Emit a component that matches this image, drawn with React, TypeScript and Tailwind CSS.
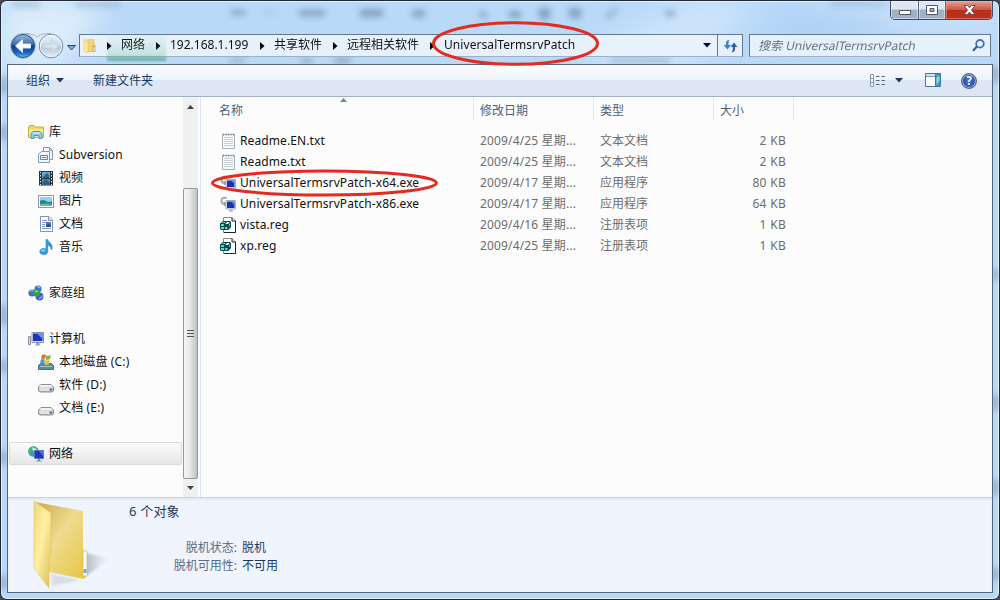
import type { ReactNode } from 'react';

const Arrow = () => (
    <span className="flex h-full w-[25px] shrink-0 items-center pl-[11px] pt-[1px]">
        <svg width="5" height="8" viewBox="0 0 5 8">
            <path d="M0 0L4.5 4L0 8Z" fill="#000" />
        </svg>
    </span>
);

const Down = ({ color = '#1e395b' }: { color?: string }) => (
    <svg width="8" height="5" viewBox="0 0 8 5" className="shrink-0">
        <path d="M0 0H8L4 4.6Z" fill={color} />
    </svg>
);

const LibraryIcon = () => (
    <svg width="16" height="16" viewBox="0 0 16 16">
        <path d="M.5 2.5L1.5 1.5H6L7 3H15.5V13.5H.5Z" fill="#ead66c" stroke="#c9ad3a" />
        <path d="M1 5H15V13H1Z" fill="#f6e68b" />
        <path d="M3 14.5V10L5 7.500H12L14 10V14.5H11V11.500H6V14.5Z" fill="#8fd0f0" stroke="#3f97cc" />
        <path d="M5.5 8H11.5L12.5 9.5H4.5Z" fill="#c4ecfb" />
    </svg>
);

const SubversionIcon = () => (
    <svg width="16" height="16" viewBox="0 0 16 16" fill="#f4f8fc" stroke="#7f9bb8">
        <path d="M5.5.5H11.5L14.5 3.5V12.5H5.5Z" />
        <path d="M11.5.5V3.5H14.5" fill="none" />
        <path d="M.5 7.5L3.5 4.5H11.5V15.5H.5Z" />
        <path d="M2.5 8.5H9.5V12.5H2.5ZM4 10.5H8.5" stroke="#6685aa" />
    </svg>
);

const VideoIcon = () => (
    <svg width="16" height="16" viewBox="0 0 16 16">
        <path d="M1 1H15V15.5H1Z" fill="#2b3139" />
        <path d="M4 2H12V8H4Z" fill="#57aee0" />
        <path d="M4 9H12V14.5H4Z" fill="#4191cc" />
        <path d="M5 7L9 3L11 5V8H5ZM5 12L8 9L12 13V14.5H4Z" fill="#315d7d" />
        <path d="M2.5 2V15M13.5 2V15" stroke="#e2e6e8" strokeDasharray="1.5 1.5" />
    </svg>
);

const PictureIcon = () => (
    <svg width="16" height="16" viewBox="0 0 16 16">
        <path d="M.5 2.5H15.5V14.5H.5Z" fill="#fff" stroke="#8897a5" />
        <path d="M2 4H14V13H2Z" fill="#8dd5f5" />
        <path d="M2 8Q5 6 8 8T14 8V10H2Z" fill="#317f86" />
        <path d="M2 10H14V13H2Z" fill="#2995a4" />
        <path d="M2 11.5L8 10.5L14 12V13H2Z" fill="#5cbf9d" />
    </svg>
);

const DocumentIcon = () => (
    <svg width="16" height="16" viewBox="0 0 16 16">
        <path d="M2.5.5H11L14.5 4V15.5H2.5Z" fill="#fcfdff" stroke="#8495a8" />
        <path d="M10.5.5V4.5H14.5" fill="#dce6f0" stroke="#8495a8" />
        <path d="M4 4.5H9M4 6.5H8M4 8.5H7M4 10.5H7M4 12.5H13" stroke="#8ca3bf" />
        <path d="M8 6H13V11H8Z" fill="#4b7eb2" />
        <path d="M8 9.5L11 8L13 10V11H8Z" fill="#234d71" />
    </svg>
);

const MusicIcon = () => (
    <svg width="16" height="16" viewBox="0 0 16 16">
        <path d="M8 .5H9.5C10 3 15 4 14 9.5L13 11C13.5 7.5 11 6.5 9.8 6V12.5C9.5 15.5 6.5 16 4 15.3C.5 14 1.5 9.8 5 9.5C6.5 9.3 7.5 9.8 8 10Z" fill="#299be0" stroke="#1778bd" strokeWidth=".5" />
        <ellipse cx="5" cy="11.5" rx="2.3" ry="1.3" fill="#7bcef4" />
    </svg>
);

const HomegroupIcon = () => (
    <svg width="16" height="16" viewBox="0 0 16 16">
        <circle cx="10" cy="4" r="3.6" fill="#4775c7" />
        <circle cx="4" cy="8" r="3.6" fill="#3c6fbd" />
        <circle cx="11.5" cy="11.5" r="4" fill="#4262bd" />
        <circle cx="8.5" cy="8" r="3.4" fill="#30a248" />
        <path d="M6.5 7Q8 4.5 10.5 6Q9 8 6.5 7Z" fill="#9ce39a" />
        <path d="M9 2Q11 1 12 3M2 6.5Q3.5 5 5 6M11 13.5Q14 13 14.5 10.5" stroke="#bcd5f5" fill="none" />
    </svg>
);

const ComputerIcon = () => (
    <svg width="16" height="16" viewBox="0 0 16 16">
        <path d="M.5 5.5H2.5V13.5H.5Z" fill="#dce0e4" stroke="#888f99" />
        <path d="M4 1.5H15.5V11.5H4Z" fill="#d9dfe8" stroke="#8a93a3" />
        <path d="M5 2.5H14.5V10H5Z" fill="#1a32c8" />
        <path d="M9 2.5H14.5V8Z" fill="#6f94f1" />
        <path d="M8 12H11.5V13.5L13 14.5H6.5L8 13.5Z" fill="#9ba2ac" />
    </svg>
);

const SystemDriveIcon = () => (
    <svg width="16" height="16" viewBox="0 0 16 16">
        <path d="M2.5 9.5H13.5L15.5 11.5V15.5H.5V11.5Z" fill="#5b8c9d" stroke="#4c6d79" />
        <path d="M2 12H14.5V12.8H2Z" fill="#a7d2d8" />
        <path d="M4 1Q6-.2 8 1L7 5Q5 4 3 5Z" fill="#ec6529" />
        <path d="M8.5 1.2Q11 2.5 13 1L12 5Q10 6.5 7.7 5.2Z" fill="#7ab843" />
        <path d="M2.8 5.6Q5 4.5 6.9 5.7L6 10Q4 9 2 10Z" fill="#41a0dc" />
        <path d="M7.5 6Q10 7 12 5.8L11 10Q8.5 11.5 6.5 10.3Z" fill="#f6bf25" />
    </svg>
);

const DriveIcon = () => (
    <svg width="16" height="16" viewBox="0 0 16 16">
        <path d="M3 7.5H13L15.5 10V14L14 15H2L.5 14V10Z" fill="#b9bdc2" stroke="#777c82" strokeWidth=".8" />
        <path d="M3 8H13L15 10.400H1Z" fill="#f1f2f4" />
        <path d="M1.5 11H11V14H1.5Z" fill="#e0e2e5" />
        <path d="M12 12H14V13.2H12Z" fill="#4a5560" />
    </svg>
);

const NetworkIcon = () => (
    <svg width="16" height="16" viewBox="0 0 16 16">
        <circle cx="5.5" cy="5.5" r="5.3" fill="#2e9bd2" />
        <path d="M2 2Q5-1 7 1Q7 4 4 5Q3 8 1 7Q-.5 4 2 2Z" fill="#43b55b" />
        <path d="M4 1.5Q7 1 9 4L5 5Z" fill="#c9f0e1" />
        <path d="M6.5 4.5H15.5V12.5H6.5Z" fill="#1b34c9" stroke="#6179a7" />
        <path d="M11 5H15V10Z" fill="#5273e3" />
        <path d="M10 13H12V14.5H13.5V15.5H8.5V14.5H10Z" fill="#7d8997" />
    </svg>
);

const TextFileIcon = () => (
    <svg width="16" height="16" viewBox="0 0 16 16">
        <path d="M2.5 1.5H14.5V15.5H2.5Z" fill="#f7f9fa" stroke="#a7aeb3" />
        <path d="M4 4.5H13M4 6.5H13M4 8.5H13M4 10.5H13M4 12.5H13" stroke="#c8d0d5" />
        <path d="M3 1.5H14" stroke="#858d92" strokeWidth="2" strokeDasharray="1 1.5" />
    </svg>
);

const ExeIcon = () => (
    <svg width="16" height="16" viewBox="0 0 16 16">
        <path d="M6.5 2Q1 1 1.5 5.5Q2 8.5 6 8" fill="none" stroke="#a3abb5" strokeWidth="2" />
        <path d="M4 5.5L7 8L4 10.5Z" fill="#8c97a5" />
        <path d="M6 4.5H15.5V13H6Z" fill="#e7ebef" stroke="#a4adba" />
        <path d="M7 5.5H14.5V12H7Z" fill="#1733b4" />
        <path d="M11 5.5H14.5V9Z" fill="#6a8cf2" />
        <path d="M9.5 13.5H12.5V14.5L13.5 15.5H8.5L9.5 14.5Z" fill="#a5acb5" />
    </svg>
);

const RegIcon = () => (
    <svg width="16" height="16" viewBox="0 0 16 16">
        <path d="M3.5.5H12L15.5 4V15.5H3.5Z" fill="#fff" stroke="#8a8a8a" />
        <path d="M12 .5V4H15.5V15.5H4" fill="none" stroke="#222" />
        <path d="M0 6.5L3 4H10L11 5V10L8.5 13H1L0 12Z" fill="#064d4d" />
        <path d="M1 7H4V9H1ZM1 10H4V12H1ZM5 10H7.5V12H5ZM3 5H6L5 6H2ZM9 7L10 6V8.5L9 9.5Z" fill="#65d2c7" />
        <path d="M7 5H9.5L8 7H5.500Z" fill="#e9fffc" />
    </svg>
);

interface NavItem {
    label: string;
    icon: () => ReactNode;
    child?: boolean;
    gap?: boolean;
    cls?: string;
}

const navItems: NavItem[] = [
    { label: '库', icon: LibraryIcon },
    { label: 'Subversion', icon: SubversionIcon, child: true, cls: 'tracking-[0.12px]' },
    { label: '视频', icon: VideoIcon, child: true },
    { label: '图片', icon: PictureIcon, child: true },
    { label: '文档', icon: DocumentIcon, child: true },
    { label: '音乐', icon: MusicIcon, child: true },
    { label: '家庭组', icon: HomegroupIcon, gap: true },
    { label: '计算机', icon: ComputerIcon, gap: true },
    { label: '本地磁盘 (C:)', icon: SystemDriveIcon, child: true, cls: 'tracking-[0.15px]' },
    { label: '软件 (D:)', icon: DriveIcon, child: true, cls: 'tracking-[0.15px]' },
    { label: '文档 (E:)', icon: DriveIcon, child: true, cls: 'tracking-[0.15px]' },
];

const files = [
    { name: 'Readme.EN.txt', icon: TextFileIcon, date: '2009/4/25', type: '文本文档', size: '2 KB' },
    { name: 'Readme.txt', icon: TextFileIcon, date: '2009/4/25', type: '文本文档', size: '2 KB' },
    { name: 'UniversalTermsrvPatch-x64.exe', icon: ExeIcon, date: '2009/4/17', type: '应用程序', size: '80 KB' },
    { name: 'UniversalTermsrvPatch-x86.exe', icon: ExeIcon, date: '2009/4/17', type: '应用程序', size: '64 KB' },
    { name: 'vista.reg', icon: RegIcon, date: '2009/4/16', type: '注册表项', size: '1 KB' },
    { name: 'xp.reg', icon: RegIcon, date: '2009/4/25', type: '注册表项', size: '1 KB' },
];

// soft shapes of the window behind the glass
const Glass = () => (
    <svg className="absolute inset-0" width="1000" height="600" viewBox="0 0 1000 600">
        <defs>
            <filter id="soft" x="-50%" y="-100%" width="200%" height="300%">
                <feGaussianBlur stdDeviation="3" />
            </filter>
            <filter id="haze" x="-50%" y="-50%" width="200%" height="200%">
                <feGaussianBlur stdDeviation="14" />
            </filter>
        </defs>
        <g filter="url(#haze)">
            <path d="M0 0H110L60 70H0Z" fill="#e6f2fd" opacity=".8" />
            <path d="M590 50L690 0H760L690 70H590Z" fill="#d9ecfd" opacity=".6" />
            <path d="M800 0H1000V30L900 25Z" fill="#dcecfb" opacity=".5" />
            <path d="M780 20H890V34H770Z" fill="#84b9ee" opacity=".45" />
        </g>
        <g filter="url(#soft)" fill="#58728f" opacity=".55">
            <path d="M12 2H40V7H12ZM75 2H120V7H75Z" opacity=".55" />
            <path d="M231 10H245V15H231Z" />
            <path d="M263 11H275V14H263Z" opacity=".4" />
            <path d="M299 10H325V16H299ZM360 9H383V17H360ZM412 10H425V17H412ZM481 9L489 18H480Z" />
            <path d="M509 11H521V18H509ZM539 8H550V19H539ZM569 8H581V18H569ZM605 17L616 8L618 10L608 19ZM663 11H677L670 18Z" />
            <path d="M830 1H885V6H830Z" opacity=".4" />
            <path d="M301 59H312V63H301ZM335 58H350V63H335ZM610 59H670V62H610ZM230 59H245V62H230Z" />
            <path d="M1 77H6V94H1ZM1 125H6V140H1ZM1 305H6V325H1ZM1 360H6V373H1ZM1 450H6V465H1ZM1 575H6V590H1Z" />
            <path d="M993 67H998V82H993ZM993 270H998V280H993ZM993 395H998V410H993ZM993 480H998V495H993ZM993 568H998V580H993Z" />
        </g>
    </svg>
);

const WindowButtons = () => (
    <div className="relative flex h-[19px] w-[103px] shrink-0 overflow-hidden rounded-b-[5px] border border-t-0 border-[#3d4c60]">
        <div className="flex w-[28px] items-center justify-center border-r border-[#56677e] bg-linear-to-b from-[#dce7f3] from-45% to-[#9fb1c7] to-50% shadow-[inset_0_0_0_1px_rgba(255,255,255,0.45)]">
            <svg width="12" height="5" viewBox="0 0 12 5" className="mt-[4px]">
                <path d="M.5.5H11.5V4.5H.5Z" fill="#fff" stroke="#4f5662" />
            </svg>
        </div>
        <div className="flex w-[27px] items-center justify-center border-r border-[#56677e] bg-linear-to-b from-[#dce7f3] from-45% to-[#9fb1c7] to-50% shadow-[inset_0_0_0_1px_rgba(255,255,255,0.45)]">
            <svg width="12" height="10" viewBox="0 0 12 10">
                <path d="M.5.5H11.5V9.5H.5Z" fill="#fff" stroke="#4f5662" />
                <path d="M4 3.5H8V6.5H4Z" fill="#a4b3c5" stroke="#4f5662" />
            </svg>
        </div>
        <div className="flex flex-1 items-center justify-center bg-linear-to-b from-[#e09a8d] from-5% via-[#cc5544] via-48% to-[#b92f1c] to-52% shadow-[inset_0_0_0_1px_rgba(255,200,190,0.4)]">
            <svg width="13" height="10" viewBox="0 0 13 10">
                <path d="M1 .5H4.5L6.5 2.8L8.5 .5H12L8.5 5L12 9.5H8.5L6.5 7.2L4.5 9.5H1L4.5 5Z" fill="#fff" stroke="#60403f" strokeWidth=".9" />
            </svg>
        </div>
    </div>
);

const NavButtons = () => (
    <svg width="71" height="30" viewBox="0 0 71 30" className="shrink-0">
        <defs>
            <linearGradient id="back" x2="0" y2="1">
                <stop offset="0" stopColor="#9db9df" />
                <stop offset=".45" stopColor="#3a68ad" />
                <stop offset=".5" stopColor="#0c3a88" />
                <stop offset=".8" stopColor="#1c69c0" />
                <stop offset="1" stopColor="#54c8f5" />
            </linearGradient>
            <linearGradient id="forward" x2="0" y2="1">
                <stop offset="0" stopColor="#eff5fb" />
                <stop offset=".48" stopColor="#cbd9e8" />
                <stop offset=".52" stopColor="#b2c5da" />
                <stop offset="1" stopColor="#e4f1fd" />
            </linearGradient>
        </defs>
        <path d="M14 3.500Q25 3 29 7Q33 3 43 3.500" fill="none" stroke="#9fb3ca" />
        <circle cx="15" cy="16" r="12.600" fill="#d5e5f5" stroke="#9fb3ca" strokeWidth=".8" />
        <circle cx="15" cy="16" r="11.500" fill="url(#back)" stroke="#234d86" />
        <path d="M7.500 16L14.500 9.500V14H22.500V18H14.500V22.500Z" fill="#fff" stroke="#dbe9fa" />
        <circle cx="43" cy="16" r="11.800" fill="url(#forward)" stroke="#748ba8" />
        <circle cx="43" cy="16" r="10.600" fill="none" stroke="#f5faff" strokeWidth=".8" />
        <path d="M50.500 16L43.500 9.500V14H36V18H43.500V22.500Z" fill="#d6e3ef" stroke="#c2d1e0" />
        <path d="M59.500 15.500H67.500L63.500 20Z" fill="#76aee6" stroke="#1e4d85" />
    </svg>
);

const AddressBar = () => (
    <div className="flex h-[23px] w-[664px] shrink-0 items-stretch border border-[#63788f] border-b-[#9db0c5] bg-[#edf5fc]/85">
        <div className="flex w-[16px] items-center justify-end">
            <svg width="13" height="16" viewBox="0 0 14 16">
                <path d="M5 1H12V14H5Z" fill="#efd777" stroke="#d1b34e" strokeWidth=".5" />
                <path d="M10 7H13.5V14.5H10Z" fill="#d6b64b" />
                <path d="M1 .5L5.5 2.5V15.5L1 13.5Z" fill="#f9e89a" stroke="#d9be5a" strokeWidth=".5" />
                <path d="M11.5 9H12.5V13H11.5Z" fill="#f8fbff" />
            </svg>
        </div>
        <Arrow />
        <span className="w-[24px] whitespace-nowrap leading-[20px]">网络</span>
        <Arrow />
        <span className="w-[79px] whitespace-nowrap leading-[20px]">192.168.1.199</span>
        <Arrow />
        <span className="w-[48px] whitespace-nowrap leading-[20px]">共享软件</span>
        <Arrow />
        <span className="w-[72px] whitespace-nowrap leading-[20px]">远程相关软件</span>
        <Arrow />
        <span className="w-[131px] whitespace-nowrap leading-[20px] tracking-[0.07px]">UniversalTermsrvPatch</span>
        <div className="ml-auto flex items-center pr-[6px]">
            <Down color="#000033" />
        </div>
        <div className="flex w-[25px] items-center justify-center border-l border-[#63788f]">
            <svg width="15" height="14" viewBox="0 0 15 14">
                <path d="M6.500 1Q2.500 1 3 5V6H.5L4.500 10.500L8 6H5.500V4Q5.500 2 6.500 1Z" fill="#3d82cc" />
                <path d="M8.500 13.500Q12.500 13 12 9V8H14.500L11 3.500L7.500 8H9.800V10Q9.800 12 8.500 13.500Z" fill="#275fae" />
            </svg>
        </div>
    </div>
);

const Toolbar = () => (
    <div className="flex h-[32px] shrink-0 items-center border-b border-[#a1afc3] bg-linear-to-b from-[#fbfdff] via-[#edf3fb] via-48% to-[#dce6f4] to-50% text-[#1e395b]">
        <span className="ml-[18px] w-[24px] whitespace-nowrap">组织</span>
        <span className="ml-[6px]">
            <Down />
        </span>
        <span className="ml-[29px] whitespace-nowrap">新建文件夹</span>
        <svg width="16" height="13" viewBox="0 0 16 13" className="ml-auto">
            <path d="M.5.5H3.5V12.5H.5Z" fill="#fff" stroke="#8794a6" />
            <path d="M1 4.5H3.5M1 8.5H3.5" stroke="#8794a6" />
            <path d="M6 2.5H9.5M6 6.5H9.5M6 10.5H9.5M11.5 2.5H15M11.5 6.5H15M11.5 10.5H15" stroke="#56687f" />
        </svg>
        <span className="ml-[9px]">
            <Down />
        </span>
        <svg width="17" height="15" viewBox="0 0 17 15" className="ml-[22px]">
            <path d="M.5.5H15.5V13.5H.5Z" fill="#fff" stroke="#4f7495" />
            <path d="M1 1H15V3.5H1Z" fill="#d2e4f0" />
            <path d="M1 3.5H15" stroke="#7899b0" />
            <path d="M10.5 1V13H15V1Z" fill="#4ba9c5" stroke="#377c9b" />
            <path d="M11.5 5L14.5 3V8L11.5 11Z" fill="#8ed6df" />
        </svg>
        <div className="ml-[19px] mr-[15px] flex h-[16px] w-[16px] items-center justify-center rounded-full border border-[#55647f] bg-radial from-[#4f75da] to-[#172f92] text-[12px] leading-none font-bold text-white shadow-[inset_0_0_0_1px_#aab9dc]">
            ?
        </div>
    </div>
);

const Row = ({ item }: { item: NavItem }) => (
    <div className={`flex h-[23px] items-center ${item.gap ? 'mt-[23px]' : ''} ${item.child ? 'pl-[30px]' : 'pl-[20px]'}`}>
        <item.icon />
        <span className={`ml-[5px] whitespace-nowrap ${item.cls ?? ''}`}>{item.label}</span>
    </div>
);

const Sidebar = () => (
    <div className="flex w-[193px] shrink-0 border-r border-[#d9e5f2]">
        <div className="w-[175px] pt-[23px]">
            {navItems.map((item) => (
                <Row key={item.label} item={item} />
            ))}
            <div className="mt-[23px] ml-px flex h-[23px] w-[173px] items-center rounded-[2px] border border-[#d9d9d9] bg-linear-to-b from-[#fbfbfb] to-[#e6e6e6] pl-[18px]">
                <NetworkIcon />
                <span className="ml-[5px]">网络</span>
            </div>
        </div>
        <div className="flex w-[15px] flex-col bg-[#f0f0f1]">
            <div className="flex h-[91px] justify-center pt-[8px]">
                <svg width="7" height="4" viewBox="0 0 7 4">
                    <path d="M0 4H7L3.5 0Z" fill="#444" />
                </svg>
            </div>
            <div className="flex h-[291px] flex-col items-center justify-center gap-[2px] rounded-[2px] border border-[#969696] bg-linear-to-r from-[#f5f5f5] via-[#e8e8e9] via-45% to-[#bfc0c2]">
                <div className="h-px w-[7px] bg-[#545454]" />
                <div className="h-px w-[7px] bg-[#545454]" />
                <div className="h-px w-[7px] bg-[#545454]" />
            </div>
            <div className="flex flex-1 items-center justify-center">
                <svg width="7" height="4" viewBox="0 0 7 4">
                    <path d="M0 0H7L3.5 4Z" fill="#444" />
                </svg>
            </div>
        </div>
    </div>
);

const FileList = () => (
    <div className="relative flex-1">
        <div className="flex h-[23px] text-[#4c607a]">
            <div className="w-[273px] border-r border-[#e0e8f1] pl-[18px] leading-[27px]">名称</div>
            <div className="w-[120px] border-r border-[#e0e8f1] pl-[6px] leading-[27px]">修改日期</div>
            <div className="w-[120px] border-r border-[#e0e8f1] pl-[6px] leading-[27px]">类型</div>
            <div className="w-[80px] border-r border-[#e0e8f1] pl-[6px] leading-[27px]">大小</div>
        </div>
        <svg width="7" height="4" viewBox="0 0 7 4" className="absolute left-[139px] top-[1px]">
            <path d="M0 4H7L3.5 0Z" fill="#6d8ba9" />
        </svg>
        <div className="pt-[10px]">
            {files.map((file) => (
                <div key={file.name} className="flex h-[21px] items-center whitespace-nowrap text-[#6d6d6d]">
                    <div className="flex w-[279px] items-center pl-[19px] text-[#111]">
                        <file.icon />
                        <span className="ml-[4px] tracking-[0.1px]">{file.name}</span>
                    </div>
                    <span className="w-[120px] tracking-[0.15px]">{file.date} 星期...</span>
                    <span className="w-[100px]">{file.type}</span>
                    <span className="w-[86px] text-right tracking-[0.3px]">{file.size}</span>
                </div>
            ))}
        </div>
    </div>
);

const Details = () => (
    <div className="flex h-[95px] shrink-0 border-t border-[#c8d4e2] bg-[#f0f4fc] text-[#1e395b] shadow-[inset_0_2px_2px_#e1e8f2]">
        <svg width="86" height="93" viewBox="0 0 86 93" className="ml-[17px] shrink-0">
            <defs>
                <linearGradient id="flap" x2="1" y2="1">
                    <stop offset="0" stopColor="#eed679" />
                    <stop offset=".45" stopColor="#fff0a5" />
                    <stop offset="1" stopColor="#ddbc4c" />
                </linearGradient>
                <linearGradient id="leaf" x2="1" y2="1">
                    <stop offset="0" stopColor="#c9a742" />
                    <stop offset=".45" stopColor="#eedb90" />
                    <stop offset="1" stopColor="#e6c53f" />
                </linearGradient>
                <linearGradient id="shade">
                    <stop offset="0" stopColor="#929ca9" stopOpacity=".7" />
                    <stop offset="1" stopColor="#c5ccd8" stopOpacity="0" />
                </linearGradient>
                <filter id="shadeBlur">
                    <feGaussianBlur stdDeviation="1.2" />
                </filter>
            </defs>
            <path d="M60 55L85 60L75 68L60 79Z" fill="url(#shade)" filter="url(#shadeBlur)" />
            <path d="M26 76L56 82L27 88Z" fill="#c9ced8" opacity=".6" filter="url(#shadeBlur)" />
            <path d="M10 4L58 13V52L62 54V77L59 81L24 74Z" fill="url(#leaf)" />
            <path d="M9 3L26 15V57L24 60V90L9 70Z" fill="url(#flap)" stroke="#ddc46f" strokeWidth=".6" />
            <path d="M58 53H62V78H58Z" fill="#f7fafe" stroke="#d1b84f" strokeWidth=".6" />
            <path d="M58.5 71H61.5V75H58.5Z" fill="#73a6df" />
        </svg>
        <div className="pl-[18px] pt-[2px]">
            <div className="text-[13px] leading-[22px] tracking-[0.2px]">6 个对象</div>
            <div className="mt-[17px] grid grid-cols-[108px_auto] gap-x-[5px] leading-[18px]">
                <span className="text-right text-[#5a6a81]">脱机状态:</span>
                <span>脱机</span>
                <span className="text-right text-[#5a6a81]">脱机可用性:</span>
                <span>不可用</span>
            </div>
        </div>
    </div>
);

const App = () => {
    return (
        <div className="h-[600px] w-[1000px] overflow-hidden bg-[#4a4854] font-['Noto_Sans','Noto_Sans_CJK_SC',sans-serif] text-[12px] text-[#111]">
            <div className="relative h-[600px] w-[1000px] overflow-hidden rounded-[7px] border border-[#202735] bg-[#b9d9f8] shadow-[inset_0_0_0_1px_#e2f2ff]">
                <div className="absolute -left-px -top-px">
                    <Glass />
                </div>
                <div className="relative flex h-full flex-col px-[6px] pb-[6px]">
                    <div className="flex h-[33px] shrink-0 items-start justify-end">
                        <WindowButtons />
                    </div>
                    <div className="flex h-[30px] shrink-0 items-start">
                        <div className="-mt-[4px] ml-px">
                            <NavButtons />
                        </div>
                        <AddressBar />
                        <div className="ml-[6px] flex h-[23px] w-[242px] items-center border border-[#63788f] border-b-[#9db0c5] bg-[#edf5fc]/85 pl-[9px] pr-[5px] text-[#68717b]">
                            <span className="inline-block -skew-x-12 whitespace-nowrap">搜索 UniversalTermsrvPatch</span>
                            <svg width="13" height="13" viewBox="0 0 13 13" className="ml-auto">
                                <circle cx="8" cy="4.8" r="3.8" fill="#eef8ff" stroke="#3d75bd" strokeWidth="1.8" />
                                <path d="M5 7.5L1 11.8" stroke="#315f9e" strokeWidth="2.2" />
                            </svg>
                        </div>
                    </div>
                    <div className="flex min-h-0 flex-1 flex-col border border-[#53657c] bg-[#fcfcfc]">
                        <Toolbar />
                        <div className="flex min-h-0 flex-1">
                            <Sidebar />
                            <FileList />
                        </div>
                        <Details />
                    </div>
                </div>
                {/* green glow under the first crumb */}
                <div className="absolute left-[106px] top-[34px] h-[26px] w-[59px] bg-linear-to-b from-[#5cae82]/5 from-20% via-[#5cae82]/25 via-80% to-[#4a9f86]/80 blur-[1px]" />
                <svg className="absolute -left-px -top-px" width="1000" height="600" viewBox="0 0 1000 600" fill="none" stroke="#e32b22">
                    <ellipse cx="515.5" cy="43.5" rx="82" ry="20.8" strokeWidth="3" />
                    <ellipse cx="324.5" cy="183" rx="112" ry="12" strokeWidth="3" />
                </svg>
            </div>
        </div>
    );
};

export default App;
